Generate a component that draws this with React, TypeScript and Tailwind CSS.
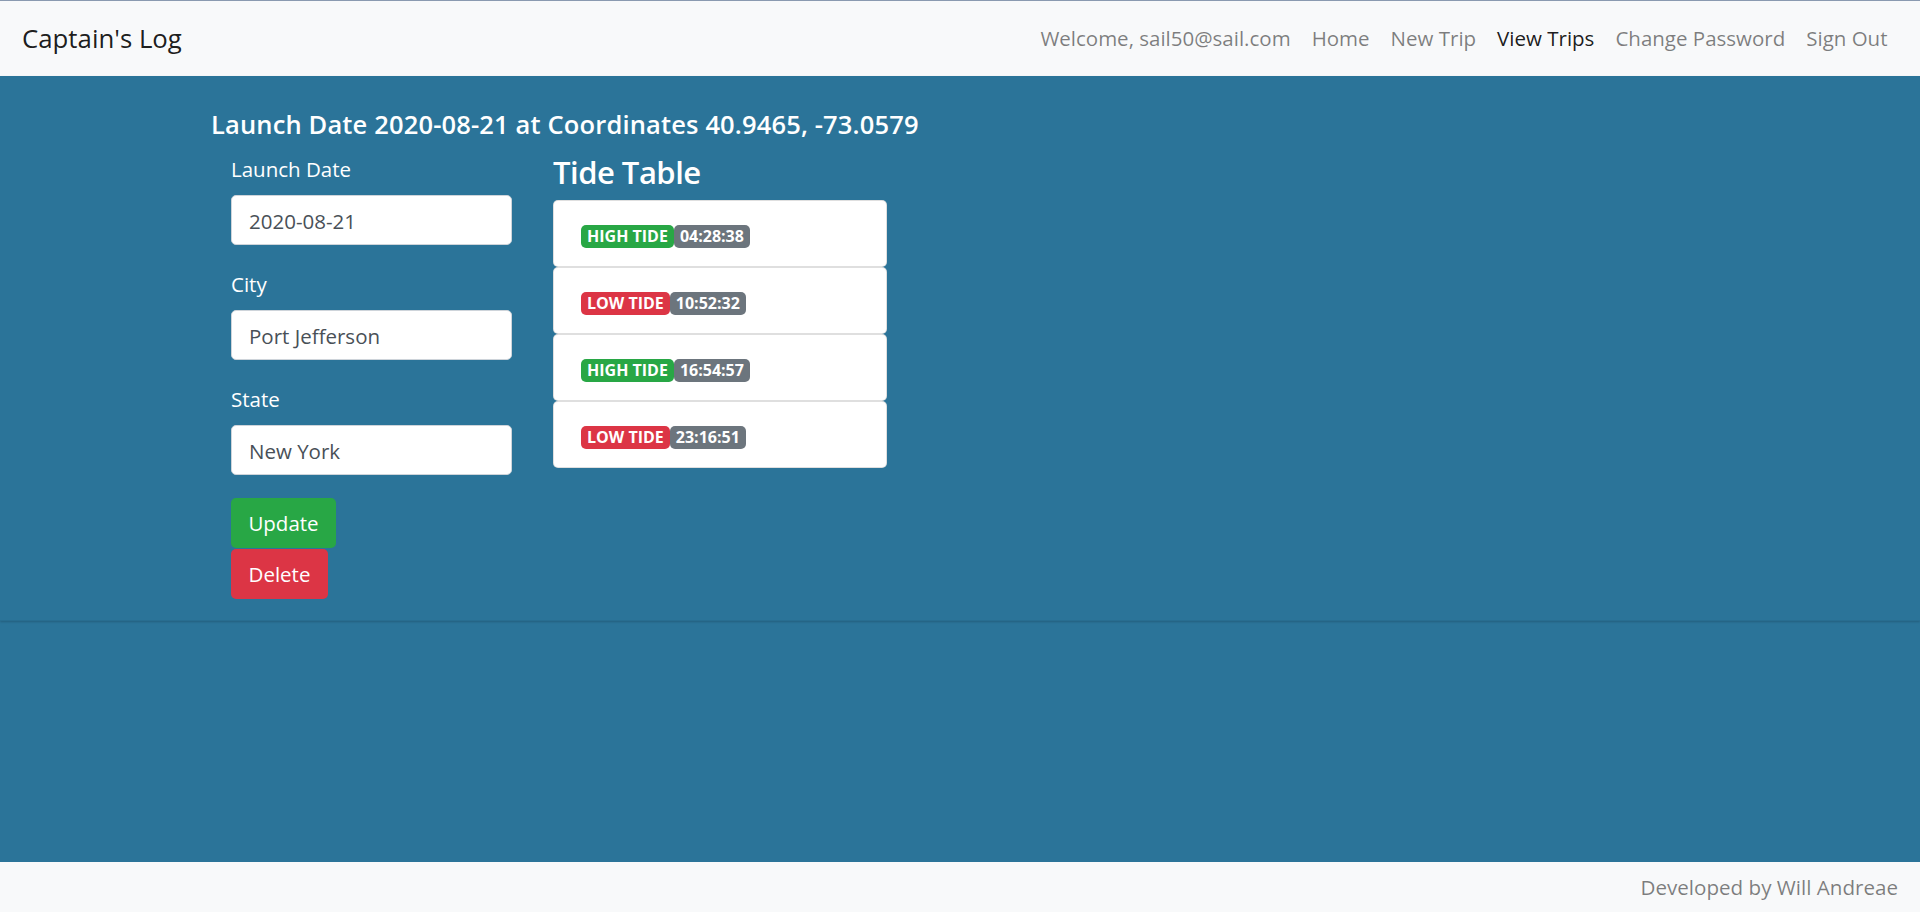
import React from "react";

const font = { fontFamily: '"Open Sans", "Noto Sans", sans-serif' };

function Field({ label, value }: { label: string; value: string }) {
  return (
    <div className="mb-[24px]">
      <div className="text-[20.5px] leading-[30px] text-white mb-[11px]">{label}</div>
      <div className="h-[50px] w-[281px] bg-white border border-[#ced4da] rounded-[5px] flex items-center pl-[17px] pt-[2px] text-[20.5px] text-[#495057]">
        {value}
      </div>
    </div>
  );
}

function TideRow({ high, time }: { high: boolean; time: string }) {
  return (
    <div className="h-[67px] w-[334px] bg-white border border-black/[0.125] rounded-[5px] flex items-center pl-[27px] pt-[5px]">
      <span
        className={`${high ? "bg-[#28a745]" : "bg-[#dc3545]"} inline-flex items-center text-white font-bold text-[16px] h-[23px] px-[6px] rounded-[5px]`}
      >
        {high ? "HIGH TIDE" : "LOW TIDE"}
      </span>
      <span className="bg-[#6c757d] inline-flex items-center text-white font-bold text-[16px] h-[23px] px-[6px] rounded-[5px]">
        {time}
      </span>
    </div>
  );
}

export default function App() {
  return (
    <div style={font} className="h-screen w-full flex flex-col overflow-hidden">
      <nav className="h-[76px] shrink-0 bg-[#f8f9fa] border-t border-[#8a9ab0] flex items-center justify-between pl-[22px] pr-[22px]">
        <div className="text-[25.8px] text-black/90">Captain's Log</div>
        <div className="flex items-center text-[20.5px]">
          <span className="px-[10.5px] text-black/50">Welcome, sail50@sail.com</span>
          <span className="px-[10.5px] text-black/50">Home</span>
          <span className="px-[10.5px] text-black/50">New Trip</span>
          <span className="px-[10.5px] text-black/90">View Trips</span>
          <span className="px-[10.5px] text-black/50">Change Password</span>
          <span className="px-[10.5px] text-black/50">Sign Out</span>
        </div>
      </nav>
      <main className="flex-1 bg-[#2b7499] flex flex-col">
        <section className="pt-[33px] pb-[21px] pl-[211px] shadow-[0_1px_2px_rgba(0,0,0,0.18)] border-b border-[#286d90]">
          <h5 className="text-[25.5px] leading-[30px] font-semibold tracking-[0.15px] text-white">
            Launch Date 2020-08-21 at Coordinates 40.9465, -73.0579
          </h5>
          <div className="flex mt-[9px]">
            <div className="pl-[20px] pt-[6px] w-[342px]">
              <Field label="Launch Date" value="2020-08-21" />
              <Field label="City" value="Port Jefferson" />
              <Field label="State" value="New York" />
              <div className="flex flex-col items-start gap-[1px] -mt-[1px]">
                <button className="h-[50px] w-[105px] bg-[#28a745] text-white text-[20.5px] rounded-[5px]">Update</button>
                <button className="h-[50px] w-[97px] bg-[#dc3545] text-white text-[20.5px] rounded-[5px]">Delete</button>
              </div>
            </div>
            <div>
              <h3 className="text-[31px] leading-[42px] font-semibold tracking-[-0.5px] text-white mb-[10px] pt-[3px] h-[42px]">Tide Table</h3>
              <div className="flex flex-col">
                <TideRow high time="04:28:38" />
                <TideRow high={false} time="10:52:32" />
                <TideRow high time="16:54:57" />
                <TideRow high={false} time="23:16:51" />
              </div>
            </div>
          </div>
        </section>
      </main>
      <footer className="h-[50px] shrink-0 bg-[#f8f9fa] flex items-center justify-end pr-[22px] text-[20.6px] text-black/50">
        Developed by Will Andreae
      </footer>
    </div>
  );
}
